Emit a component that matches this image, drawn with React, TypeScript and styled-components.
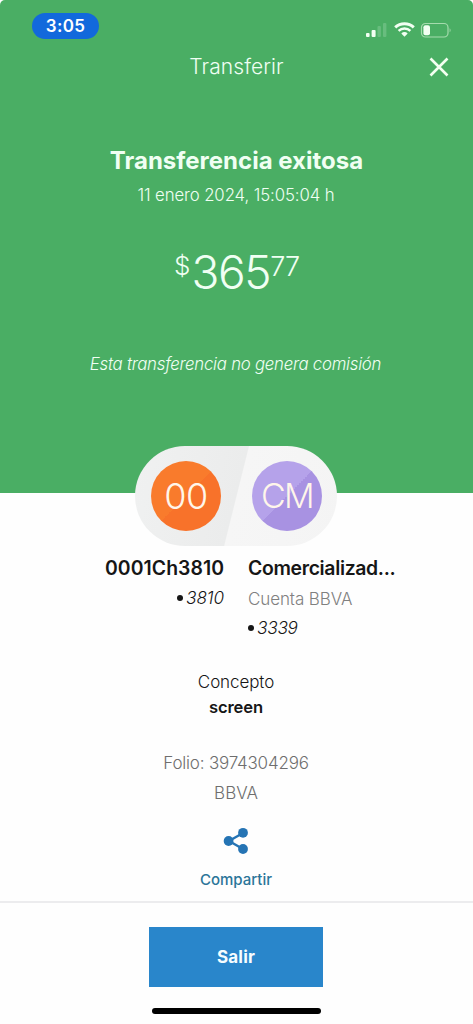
import React from 'react';
import styled, { createGlobalStyle, css } from 'styled-components';

const GlobalStyle = createGlobalStyle`
  *, *::before, *::after { box-sizing: border-box; }
  body { margin: 0; background: #fefefe; font-family: Inter, Roboto, sans-serif; }
  button { font: inherit; border: 0; padding: 0; background: none; cursor: pointer; }
`;

type TypeProps = { $size: number; $line: number; $track?: number; $weight?: number };

const type = css<TypeProps>`
  font-size: ${p => p.$size}px;
  line-height: ${p => p.$line}px;
  letter-spacing: ${p => p.$track ?? 0}px;
  font-weight: ${p => p.$weight ?? 300};
  white-space: nowrap;
`;

const Screen = styled.div`
  width: 473px;
  height: 1024px;
  display: flex;
  flex-direction: column;
  background: #fefefe;
  overflow: hidden;
`;

const Hero = styled.header`
  height: 493px;
  flex: none;
  display: flex;
  flex-direction: column;
  align-items: center;
  background: #4aae64;
  color: #f0fff3;
  border-radius: 5px 5px 0 0;
`;

const StatusBar = styled.div`
  width: 100%;
  height: 53px;
  padding: 13px 22px 0 32px;
  display: flex;
  justify-content: space-between;
  align-items: flex-start;
`;

const Clock = styled.span<TypeProps>`
  ${type}
  width: 67px;
  height: 26px;
  border-radius: 13px;
  background: #1269dc;
  color: #fff;
  text-align: center;
`;

const StatusGlyphs = styled.svg`
  margin-top: 8px;
`;

const NavBar = styled.div`
  width: 100%;
  display: grid;
  grid-template-columns: 60px 1fr 60px;
  align-items: center;
  text-align: center;
  height: 28px;
`;

const NavTitle = styled.h1<TypeProps>`
  ${type}
  grid-column: 2;
  margin: 0;
`;

const CloseButton = styled.button`
  height: 28px;
  padding-right: 8px;
  color: #f3fff0;
  svg { display: block; margin: 0 auto; }
`;

const Heading = styled.h2<TypeProps>`
  ${type}
  margin: 65px 0 0;
`;

const DateLine = styled.p<TypeProps>`
  ${type}
  margin: 8px 0 0;
  padding-right: 1px;
`;

const Amount = styled.div<TypeProps>`
  ${type}
  display: flex;
  align-items: flex-start;
  margin-top: 39px;
`;

const AmountMark = styled.span<TypeProps>`
  ${type}
`;

const FeeNote = styled.p<TypeProps>`
  ${type}
  margin: 53px 0 0;
  padding-right: 2px;
  font-style: italic;
`;

const Parties = styled.div`
  width: 202px;
  height: 100px;
  flex: none;
  margin: -47px 0 0 135px;
  padding: 0 15px 0 16px;
  display: flex;
  align-items: center;
  justify-content: space-between;
  border-radius: 50px;
  background: linear-gradient(104deg, #f0f1f1 0, #ebecec 50%, #f6f6f6 50.5%, #f4f4f4 100%);
`;

const Avatar = styled.div<TypeProps & { $from: string; $to: string }>`
  ${type}
  width: 70px;
  height: 70px;
  border-radius: 50%;
  text-align: center;
  color: #fff6ea;
  background: linear-gradient(135deg, ${p => p.$from} 50%, ${p => p.$to} 50%);
`;

const Accounts = styled.section`
  display: grid;
  grid-template-columns: 224px 1fr;
  column-gap: 24px;
  margin-top: 10px;
  height: 97px;
  flex: none;
`;

const Account = styled.div<{ $end?: boolean }>`
  display: flex;
  flex-direction: column;
  align-items: ${p => (p.$end ? 'flex-end' : 'flex-start')};
  color: #161616;
`;

const AccountName = styled.strong<TypeProps>`
  ${type}
`;

const AccountKind = styled.span<TypeProps>`
  ${type}
  margin-top: 7px;
  color: #808080;
`;

const AccountNumber = styled.span<TypeProps & { $gap: number }>`
  ${type}
  display: flex;
  align-items: center;
  gap: 3px;
  margin-top: ${p => p.$gap}px;
  font-style: italic;
  &::before {
    content: '';
    width: 6px;
    height: 6px;
    border-radius: 50%;
    background: #161616;
  }
`;

const Details = styled.section`
  display: flex;
  flex-direction: column;
  align-items: center;
  flex: none;
  height: 248px;
  padding-top: 17px;
  padding-right: 1px;
`;

const DetailText = styled.span<TypeProps & { $muted?: boolean; $gap?: number }>`
  ${type}
  color: ${p => (p.$muted ? '#6e6e6e' : '#161616')};
  margin-top: ${p => p.$gap ?? 0}px;
`;

const ShareButton = styled.button`
  margin-top: 22px;
  display: flex;
  flex-direction: column;
  align-items: center;
  color: #2574b4;
`;

const ShareLabel = styled.span<TypeProps>`
  ${type}
  margin-top: 15px;
  color: #2b7599;
`;

const Footer = styled.footer`
  flex: 1;
  border-top: 2px solid #ececee;
  padding-top: 24px;
  display: flex;
  flex-direction: column;
  align-items: center;
`;

const ExitButton = styled.button<TypeProps>`
  && {
    ${type}
  }
  width: 174px;
  height: 60px;
  background: #2986cb;
  color: #f6fdff;
  margin-right: 1px;
`;

const HomeIndicator = styled.div`
  width: 169px;
  height: 6px;
  margin-top: 21px;
  border-radius: 3px;
  background: #000;
`;

const StatusIcons = () => (
  <StatusGlyphs width="88" height="18" viewBox="0 0 88 18" fill="none">
    <rect x="3" y="12" width="3.6" height="4" rx="1" fill="#f2fff2" />
    <rect x="8.6" y="9" width="4" height="7" rx="1" fill="#f2fff2" />
    <rect x="14.5" y="5" width="3.4" height="11" rx="1" fill="#68bd7e" />
    <rect x="20" y="2" width="3.4" height="14" rx="1" fill="#68bd7e" />
    <path d="M32.2 6.4a13.6 13.6 0 0 1 18.6 0" stroke="#f2fff2" strokeWidth="3" />
    <path d="M35.6 9.8a8.6 8.6 0 0 1 11.8 0" stroke="#f2fff2" strokeWidth="2.5" />
    <path d="M38.3 12.4a4.7 4.7 0 0 1 6.4 0L41.5 15.7z" fill="#f2fff2" />
    <rect x="58.5" y="2.5" width="26.5" height="13.5" rx="4" stroke="#a5dbad" strokeWidth="1.2" />
    <rect x="60.4" y="4.3" width="6.6" height="10" rx="2" fill="#f2fff2" />
    <path d="M86.6 7.2v4c1.3-.5 1.3-3.5 0-4z" fill="#a5dbad" />
  </StatusGlyphs>
);

export default function App() {
  return (
    <>
      <GlobalStyle />
      <Screen>
        <Hero>
          <StatusBar>
            <Clock $size={17} $line={27} $weight={600} $track={0.3}>3:05</Clock>
            <StatusIcons />
          </StatusBar>
          <NavBar>
            <NavTitle $size={21} $line={28} $track={0.1}>Transferir</NavTitle>
            <CloseButton aria-label="Cerrar">
              <svg width="20" height="20" viewBox="0 0 20 20" fill="none" stroke="currentColor" strokeWidth="2.6">
                <path d="M1.5 1.5l17 17M18.5 1.5l-17 17" />
              </svg>
            </CloseButton>
          </NavBar>
          <Heading $size={24} $line={30} $weight={700}>Transferencia exitosa</Heading>
          <DateLine $size={16.8} $line={22} $track={-0.1}>11 enero 2024, 15:05:04 h</DateLine>
          <Amount $size={46} $line={54} $track={-1.3}>
            <AmountMark $size={26} $line={41} $track={1}>$</AmountMark>
            365
            <AmountMark $size={27} $line={43} $track={-1}>77</AmountMark>
          </Amount>
          <FeeNote $size={16.8} $line={24} $track={-0.25}>Esta transferencia no genera comisión</FeeNote>
        </Hero>
        <Parties>
          <Avatar $size={36} $line={70} $track={-0.5} $from="#f97b2c" $to="#f8722a">00</Avatar>
          <Avatar $size={34} $line={70} $track={-1.8} $from="#b5a2ea" $to="#a892e2">CM</Avatar>
        </Parties>
        <Accounts>
          <Account $end>
            <AccountName $size={19.4} $line={24} $track={0.05} $weight={600}>0001Ch3810</AccountName>
            <AccountNumber $size={17.2} $line={24} $track={-0.1} $gap={6}>3810</AccountNumber>
          </Account>
          <Account>
            <AccountName $size={19.4} $line={24} $track={-0.33} $weight={600}>Comercializad...</AccountName>
            <AccountKind $size={17} $line={24} $track={-0.1}>Cuenta BBVA</AccountKind>
            <AccountNumber $size={17.2} $line={24} $track={-0.3} $gap={5}>3339</AccountNumber>
          </Account>
        </Accounts>
        <Details>
          <DetailText $size={17} $line={24} $track={-0.1}>Concepto</DetailText>
          <DetailText $size={16.6} $line={24} $track={-0.1} $weight={600} $gap={1}>screen</DetailText>
          <DetailText $size={17} $line={24} $track={-0.2} $gap={32} $muted>Folio: 3974304296</DetailText>
          <DetailText $size={17} $line={24} $gap={6} $muted>BBVA</DetailText>
          <ShareButton>
            <svg width="26" height="28" viewBox="0 0 26 28" fill="currentColor">
              <path d="M20 6L6 14l14 8" fill="none" stroke="currentColor" strokeWidth="2.4" />
              <circle cx="20" cy="5.8" r="4.9" />
              <circle cx="5.6" cy="14" r="4.9" />
              <circle cx="20" cy="22" r="4.9" />
            </svg>
            <ShareLabel $size={15} $line={20} $weight={500}>Compartir</ShareLabel>
          </ShareButton>
        </Details>
        <Footer>
          <ExitButton $size={17} $line={60} $weight={700} $track={0.2}>Salir</ExitButton>
          <HomeIndicator />
        </Footer>
      </Screen>
    </>
  );
}
